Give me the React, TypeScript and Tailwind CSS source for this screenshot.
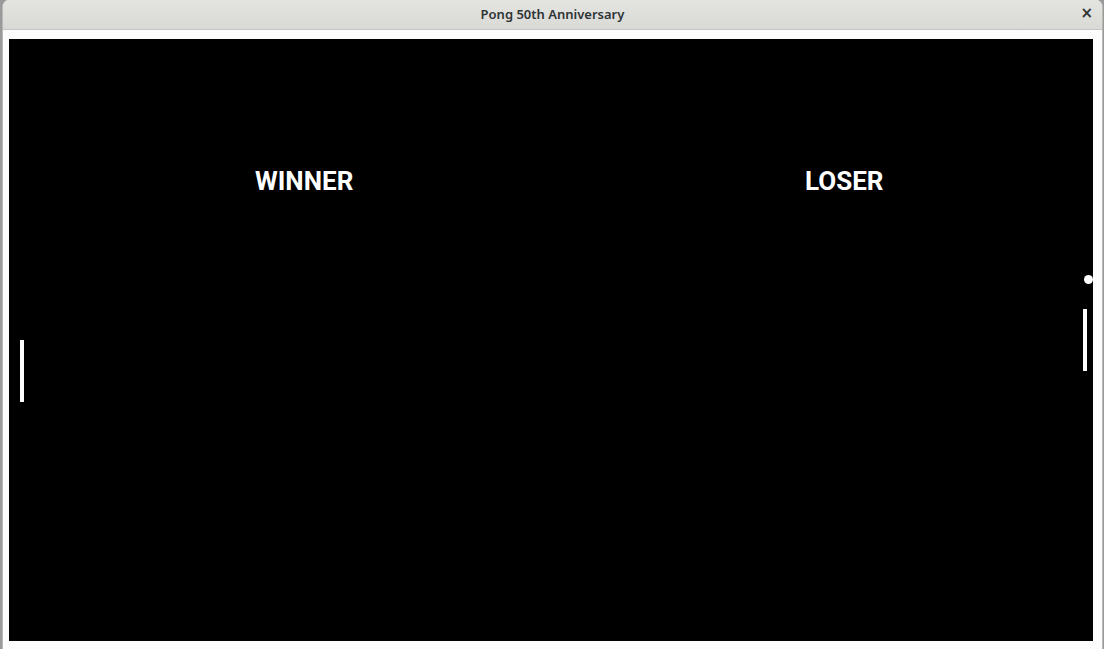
import React from "react";

export default function App() {
  return (
    <div className="w-[1104px] h-[649px] bg-[#9a9a9a] flex overflow-hidden">
      <div className="ml-[2px] mr-[1px] flex-1 flex flex-col bg-[#fcfcfc] rounded-t-[7px] border-x border-[#b8b8b5] overflow-hidden">
        {/* title bar */}
        <div className="h-[30px] shrink-0 relative flex items-center justify-center bg-gradient-to-b from-[#e4e4e1] to-[#d9d9d6] border-b border-[#c4c4c0]">
          <span className="text-[13px] font-semibold text-[#2e3436] leading-none" style={{ fontFamily: '"Noto Sans", "DejaVu Sans", sans-serif' }}>
            Pong 50th Anniversary
          </span>
          <span className="absolute right-[9px] top-[6px] text-[15px] font-bold text-[#2e3436] leading-none" style={{ fontFamily: '"DejaVu Sans", sans-serif' }}>
            ×
          </span>
        </div>
        {/* game area */}
        <div className="flex-1 pl-[6px] pr-[9px] pt-[9px] pb-[8px] flex">
          <div className="flex-1 bg-black relative" style={{ fontFamily: 'Roboto, "Liberation Sans", sans-serif' }}>
            <span className="absolute left-[246px] top-[129px] text-white text-[26px] font-bold leading-none">WINNER</span>
            <span className="absolute left-[796px] top-[129px] text-white text-[26px] font-bold leading-none">LOSER</span>
            <div className="absolute left-[11px] top-[301px] w-[4px] h-[62px] bg-white" />
            <div className="absolute left-[1074px] top-[270px] w-[4px] h-[62px] bg-white" />
            <div className="absolute left-[1075px] top-[236px] w-[9px] h-[9px] rounded-full bg-white" />
          </div>
        </div>
      </div>
    </div>
  );
}
